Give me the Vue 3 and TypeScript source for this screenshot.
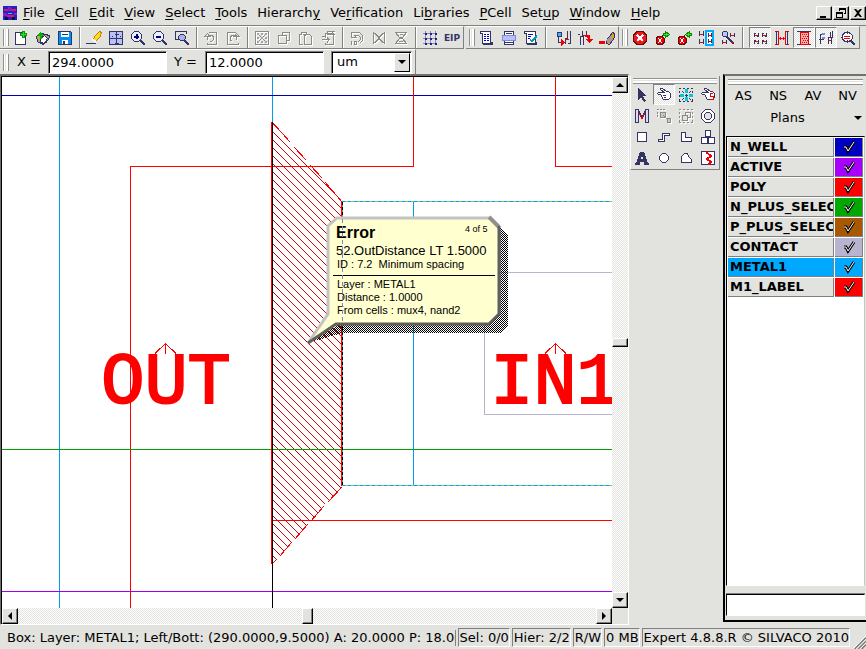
<script setup lang="ts">
import { ref } from 'vue'

type Shape = [d: string, stroke: string, fill?: string, width?: number]
interface Tool { icon: string; label: string; off?: boolean; on?: boolean }
interface Layer { name: string; color: string; visible: boolean }

const N = '#333366'
const G = '#8a8a86'
const R = '#f00000'
const C = '#00a8ff'

const handShape = 'M1.500 6.500l1-1h6l-4-3v-1h2l4 3h2l2 2v4l-2 2h-5l-1-1v-1l-1-1v-1l-1-1h-2z'

const icons: Record<string, Shape[]> = {
  app: [
    ['M0 0h16v16H0z', 'none', '#2222c8'],
    ['M1 3h5v3H1zM9 3h6v3H9zM4 10h8v2H4z', 'none', '#f01050'],
    ['M6 1h3v5H6zM0 8h4v3H0zM12 8h4v2h-4z', 'none', '#8020d0'],
    ['M2 4h2v1H2zM11 4h2v1h-2zM6 8h4v1H6z', 'none', '#20d0f0'],
    ['M2 13h4v3H2zM10 13h4v3h-4z', 'none', '#081050'],
  ],
  create: [
    ['M2.5 2.5h8l2 3v9h-10z', N, '#fff'],
    ['M10.5 1v7M7 4.5h7', '#00a000', 'none', 3],
    ['M10.5 2v5M8 4.5h5', '#30e030'],
  ],
  open: [
    ['M1.5 6.500l5-3 8 2v2l-4 6-3 1-5-3z', N, '#b0a868'],
    ['M5.500 8.500l4-3 3 3-3 5-4-1z', N, '#fff'],
    ['M5.500 9V4M3 5h5', '#00b800', 'none', 2],
    ['M4 3.500h3M5 2.500h1', '#00b800'],
  ],
  save: [
    ['M1.5 1.5h12l1 1v12h-13z', N, '#0090f0'],
    ['M4 2h8v5H4zM5 10h6v4H5z', 'none', '#fff'],
    ['M5 4h6v1H5zM6 11h2v3H6z', 'none', N],
  ],
  brush: [
    ['M6.500 10.500l3-5 4-4 2 1-1 4-5 5z', '#c88000', '#ffd820'],
    ['M6 9l4 3', '#f8f8f8', 'none', 2],
    ['M0 13.500h10', N],
  ],
  fit: [
    ['M1.5 1.5h13v13h-13z', N, '#b8c0f4'],
    ['M8.500 2v12M2 8.500h12M4 6.500h1M12 6.500h1M6.500 4h4M6.500 13h4', N],
  ],
  zoomIn: [
    ['M4.500 1.5h4l3 3v4l-3 3h-4l-3-3v-4z', N, '#e8f0ff'],
    ['M6.500 4v5M4 6.500h5', '#000080', 'none', 2],
    ['M10 10l5 5', N, 'none', 2],
  ],
  zoomOut: [
    ['M4.500 1.5h4l3 3v4l-3 3h-4l-3-3v-4z', N, '#e8f0ff'],
    ['M4 6.500h5', '#000080', 'none', 2],
    ['M10 10l5 5', N, 'none', 2],
  ],
  zoomBox: [
    ['M1.500 10V1.500h11v2', N],
    ['M1.500 9.500h4', N],
    ['M6.500 4.500h3l2 2v2l-2 2h-3l-2-2v-2z', N, '#a8b0f0'],
    ['M10 10l5 5', N, 'none', 2],
  ],
  undo: [
    ['M5.500 2.500h8v12h-9v-2', G],
    ['M6.500 11.500h2l2-2v-3l-2-1h-4M1.500 6.500h6l-3-3zM4.500 7v3', G],
  ],
  redo: [
    ['M10.500 2.500h-8v12h11v-2', G],
    ['M6.500 11.500l-1-2v-3l2-1h4M8.500 6.500h6l-3-3zM11.500 7v3', G],
  ],
  cut: [
    ['M1.500 1.500h13v13h-13z', G, 'none'],
    ['M3 3l10 10M13 3L3 13', G],
    ['M3 3h2v2H3zM7 3h2v2H7zM11 3h2v2h-2zM3 7h2v2H3zM7 7h2v2H7zM11 7h2v2h-2zM3 11h2v2H3zM7 11h2v2H7zM11 11h2v2h-2z', 'none', '#a4a4a0'],
  ],
  copy: [
    ['M6.500 5V2.500h7v8h-3', G],
    ['M2.500 5.500h8v8h-8z', G],
  ],
  paste: [
    ['M4.500 14.500h-3v-10h2v-2h5v2h3l2 2v8h-7v-9l3-1', G],
    ['M5 4.500h5', G],
  ],
  pasteIn: [
    ['M5.500 8V3.500h8v11h-8v-2M7 1.500h5v3H7zM2 9.500h7M7 7.500l2 2-2 3M2 6.500h3', G],
    ['M12 1h3M14 4h1', G],
  ],
  rotate: [
    ['M2.500 1.500v6h5l-2-2h4l2 2v2l-3 3M2.500 2.500h8l3 3v5l-3 3', G],
    ['M2 11v4M5.500 11.500h2v3h-2z', G],
  ],
  flipH: [['M2.500 2.500v11l5-5v-1zM13.500 2.500v11l-5-5v-1zM4.500 3l7 10M11.500 3l-7 10', G]],
  flipV: [['M2.500 2.500h11l-4 5h-3zM2.500 13.500h11l-4-5h-3zM7 4.500h3M6 11.500h4', G]],
  grid: [
    ['M3.500 1v14M8.500 1v14M13.500 1v14M1 3.500h14M1 8.500h14M1 13.500h14', '#8888bc'],
    ['M3 3h2v2H3zM8 3h2v2H8zM13 3h2v2h-2zM3 8h2v2H3zM8 8h2v2H8zM13 8h2v2h-2zM3 13h2v2H3zM8 13h2v2H8zM13 13h2v2h-2z', 'none', '#202080'],
  ],
  script: [
    ['M1.500 1.500h10v11h2v2h-9l-1-2v-9h-2z', N, '#fff'],
    ['M5 4.500h2M8 4.500h2M5 6.500h2M8 6.500h2M5 8.500h2M8 8.500h2M5 10.500h2M8 10.500h2', '#0000e0'],
    ['M5 13.500h8', N],
  ],
  scriptRun: [
    ['M3.500 1.500h9v13h-9z', N, '#fff'],
    ['M1.500 5.500h13v5h-13z', '#8088d8', '#b8c0ff'],
    ['M5 3.500h6M4 12.500h8', N],
  ],
  scriptEdit: [
    ['M1.500 1.500h11v11h1v2h-9l-1-2v-9h-2z', N, '#fff'],
    ['M5 4.500h5M5 6.500h3M5 8.500h2', '#0000e0'],
    ['M7 9.500l2 2 5-6', '#0098b8', 'none', 2],
    ['M5 13.500h9', N],
  ],
  probe: [
    ['M2 2h4v4H2z', N, '#40b0ff'],
    ['M3.500 7v5h5M12.500 1v7h-2v6M15.500 1v12h-3', N],
    ['M6.500 10l3 2.500-3 2.500z', R, R],
    ['M10 9.500h4', R],
  ],
  probeOut: [
    ['M3.500 15V6.500h2V1M6.500 15V5.500h3V1M1 4.500h2', N],
    ['M7 5.500h5.500v4M10 9.500h5l-2.500 3z', R, R],
  ],
  erase: [
    ['M0 12.500h6', R, 'none', 3],
    ['M7.500 10.500l6-8 2 1v4l-5 7-3-1z', N, '#e0a020'],
    ['M7 11l4-5 3 3-4 5z', 'none', '#a89898'],
  ],
  stop: [
    ['M5 1.500h6l3.500 3.500v6l-3.500 3.500h-6l-3.500-3.500v-6z', '#601010', '#f01818'],
    ['M5 5l6 6M11 5l-6 6', '#fff', 'none', 2],
  ],
  errorNext: [
    ['M4 6.500h4l2 2v4l-2 2h-4l-2-2v-4z', '#601010', R],
    ['M4 8l4 5M8 8l-4 5', '#fff'],
    ['M8 6l2-2', '#601010'],
    ['M9.500 3.500h2v-2l4 3-4 3v-2h-2z', '#108010', '#30f000'],
  ],
  errorPrev: [
    ['M4 6.500h4l2 2v4l-2 2h-4l-2-2v-4z', '#601010', R],
    ['M4 8l4 5M8 8l-4 5', '#fff'],
    ['M8 6l2-2', '#601010'],
    ['M15.500 3.500h-2v-2l-4 3 4 3v-2h2z', '#108010', '#30f000'],
  ],
  compare: [
    ['M1.500 1v5M5.500 1v5M1.500 9v5M5.500 9v5', N],
    ['M2 4.500h3M2 12.500h3', R],
    ['M8 1h7v14H8z', C, '#fff', 2],
    ['M10.500 3v4M13.500 3v4M10.500 9v4M13.500 9v4', N],
    ['M11 5.500h2M11 11.500h2', R],
  ],
  inspect: [
    ['M3.500 1.500h3l1 1v3l-1 1h-3l-1-1v-3z', N, '#b8c8ff'],
    ['M7 7l7 7', N, 'none', 2],
    ['M10.500 3v4M14.500 3v4M2.500 10v4M6.500 10v4', N],
    ['M11 5.500h3M3 12.500h3M11 12.500h3', R],
  ],
  cells: [
    ['M2.500 3v4M6.500 3v4M10.500 3v4M14.500 3v4M2.500 10v4M6.500 10v4M10.500 10v4M14.500 10v4', N],
    ['M3 3.500h1M5 6.500h1M11 3.500h1M13 6.500h1M3 10.500h1M5 13.500h1M11 10.500h1M13 13.500h1', N],
    ['M3 5.500h3M11 5.500h3M3 11.500h3M11 11.500h3', R],
  ],
  distance: [
    ['M1 1.500h3.500v13H1M15 1.500h-3.500v13H15', R],
    ['M2.500 1v14M13.500 1v14', N],
    ['M5 8.500h6M6.500 7v3M9.500 7v3', R],
  ],
  block: [
    ['M1 1.500h14M1 14.500h3M12 14.500h3', N],
    ['M4.500 2.500v12h8v-12z', R, '#f0b0b0'],
    ['M6 4.500h1M8 4.500h1M10 4.500h1M7 6.500h1M9 6.500h1M11 6.500h1M6 8.500h1M8 8.500h1M10 8.500h1M7 10.500h1M9 10.500h1M11 10.500h1M6 12.500h1M8 12.500h1M10 12.500h1', R],
  ],
  wires: [
    ['M2.500 14V4.500h3M1 9.500h5M10.500 14V7.500h2V2M13.500 14V7.500h1V1', N],
    ['M4 3.500h3M4 7.500h3', '#8088d8', 'none', 2],
    ['M10 10.500h3', R],
  ],
  zoomError: [
    ['M5 2.500h4l3 2.500v4l-3 2.500h-4L2.500 9V5z', N, '#fff'],
    ['M4 6.500h6M4 8.500h6', R],
    ['M11 11l4 4', N, 'none', 2],
    ['M1 7.500h2M7.500 1v3M7.500 10v3', N],
  ],
  arrow: [['M4 1v12l3-3 3 5 2-1-3-5h4z', 'none', N]],
  hand: [
    [handShape, N, '#fff'],
    ['M7 8.500h3M8 10.500h2', N],
  ],
  handS: [
    [handShape, N, '#fff'],
    ['M13 6.500h-3v3h3v3h-3', R],
  ],
  target: [
    ['M1 1.500h2M5 1.500h2M9 1.500h2M13 1.500h2M1 14.500h2M5 14.500h2M9 14.500h2M13 14.500h2M1.500 4v2M1.500 8v2M1.500 12v2M14.500 4v2M14.500 8v2M14.500 12v2', N],
    ['M8.500 2v4M8.500 10v4M2 8.500h4M11 8.500h4', '#00c8d8', 'none', 3],
    ['M4 4l2 2M13 4l-2 2M4 13l2-2M13 13l-2-2M7 8.500h3M8.500 7v3', N],
  ],
  merge: [
    ['M1.500 1.500h3v13h-3zM11.500 1.500h3v13h-3z', N, '#d8dcf8'],
    ['M4.500 2l3.500 7 3.500-7', N],
    ['M5 5l3 6 3-6', R],
  ],
  group: [
    ['M1 1.500h2M4 1.500h2M7 1.500h2M1.500 4v2M1.500 7v2M4 8.500h2', G],
    ['M4.500 4.500h5v5h-5zM7.500 7.500l4 4M11.500 10.500h3v4h-3z', G, '#c8c8c4'],
  ],
  select: [
    ['M1 1.500h2M5 1.500h2M9 1.500h2M13 1.500h2M1 14.500h2M5 14.500h2M9 14.500h2M13 14.500h2M1.500 4v2M1.500 8v2M1.500 12v2M14.500 4v2M14.500 8v2M14.500 12v2', G],
    ['M7.500 4.500h5v5h-5z', G],
    ['M4.500 7.500h5v5h-5z', G, '#e2e2de'],
  ],
  ring: [
    ['M5.500 1.500h5l4 4v5l-4 4h-5l-4-4v-5z', N, '#fff'],
    ['M6.500 4.500h3l2 2v3l-2 2h-3l-2-2v-3z', N, '#e2e2de'],
  ],
  rect: [['M3.500 3.500h9v9h-9z', N, '#fff']],
  wire: [['M2.500 10.500h4v-6h7v2h-5v6h-6z', N, '#fff']],
  poly: [['M3.500 3.500h4v5h6v4h-10z', N, '#fff']],
  stack: [['M5.500 1.500h5v6h-5zM1.500 8.500h6v6h-6zM8.500 8.500h6v6h-6z', N, '#fff']],
  text: [['M6 2h4l4 11h1v2h-5v-3H6v3H1v-2h1zM7 9h2l-1-4z', 'none', N]],
  circle: [['M6.500 3.500h3l3 3v3l-3 3h-3l-3-3v-3z', N, '#fff']],
  arc: [['M3.500 12.500v-6l3-3h3l1 3 3 3v3z', N, '#fff']],
  break: [
    ['M1.500 1.500h13v13h-13z', N, '#fff'],
    ['M6 2l5 4-4 3 4 3-3 3', R, 'none', 2],
  ],
}

const menus = ['_File', '_Cell', '_Edit', '_View', '_Select', '_Tools', 'Hierarch_y', 'Ve_rification', 'Li_braries', '_PCell', 'Set_up', '_Window', '_Help'].map((m) => {
  const i = m.indexOf('_')
  return { before: m.slice(0, i), key: m[i + 1], after: m.slice(i + 2) }
})

const t = (icon: string, label: string, extra: Partial<Tool> = {}): Tool => ({ icon, label, ...extra })
const off = { off: true }
const on = { on: true }

const bars: { name: string; wide: boolean; groups: Tool[][] }[] = [
  {
    name: 'Standard', wide: false, groups: [
      [t('create', 'New'), t('open', 'Open'), t('save', 'Save')],
      [t('brush', 'Redraw'), t('fit', 'Fit all'), t('zoomIn', 'Zoom in'), t('zoomOut', 'Zoom out'), t('zoomBox', 'Zoom box')],
      [t('undo', 'Undo', off), t('redo', 'Redo', off)],
      [t('cut', 'Cut', off), t('copy', 'Copy', off), t('paste', 'Paste', off), t('pasteIn', 'Paste into', off)],
      [t('rotate', 'Rotate', off), t('flipH', 'Flip horizontal', off), t('flipV', 'Flip vertical', off)],
      [t('grid', 'Grid'), t('EIP', 'Edit in place')],
    ],
  },
  {
    name: 'Scripts', wide: true, groups: [
      [t('script', 'Script'), t('scriptRun', 'Run script'), t('scriptEdit', 'Edit script')],
      [t('probe', 'Probe'), t('probeOut', 'Probe net'), t('erase', 'Erase marks')],
    ],
  },
  {
    name: 'Errors', wide: true, groups: [
      [t('stop', 'Stop'), t('errorNext', 'Next error'), t('errorPrev', 'Previous error'), t('compare', 'Compare'), t('inspect', 'Inspect')],
      [t('cells', 'Cells', on), t('distance', 'Distance'), t('block', 'Block', on), t('wires', 'Wires', on), t('zoomError', 'Zoom to error')],
    ],
  },
]

const palette: Tool[] = [
  t('arrow', 'Select'), t('hand', 'Pan', on), t('target', 'Move'), t('handS', 'Stretch'),
  t('merge', 'Merge'), t('group', 'Group', off), t('select', 'Ungroup', off), t('ring', 'Ring'),
  t('rect', 'Box'), t('wire', 'Wire'), t('poly', 'Polygon'), t('stack', 'Array'),
  t('text', 'Text'), t('circle', 'Circle'), t('arc', 'Arc'), t('break', 'Break'),
]

const layers = ref<Layer[]>([
  { name: 'N_WELL', color: '#0000c0', visible: true },
  { name: 'ACTIVE', color: '#a800ff', visible: true },
  { name: 'POLY', color: '#ff0000', visible: true },
  { name: 'N_PLUS_SELECT', color: '#00a800', visible: true },
  { name: 'P_PLUS_SELECT', color: '#a85800', visible: true },
  { name: 'CONTACT', color: '#b8b4d0', visible: true },
  { name: 'METAL1', color: '#00a8ff', visible: true },
  { name: 'M1_LABEL', color: '#ff0000', visible: true },
])
const current = ref('METAL1')
const filters = ['AS', 'NS', 'AV', 'NV']
const panes = ['Sel: 0/0', 'Hier: 2/2', 'R/W', '0 MB', 'Expert 4.8.8.R © SILVACO 2010']

const x = ref('294.0000')
const y = ref('12.0000')
const panX = ref(50)
const panY = ref(50)

const hatch = Array.from({ length: 8 }, (_, i) => `M${i} ${i}h1v1h-1z`).join('')
</script>

<template>
  <div class="app">
    <nav class="menubar">
      <svg class="logo" viewBox="0 0 16 16" shape-rendering="crispEdges" aria-hidden="true">
        <path v-for="(s, i) in icons.app" :key="i" :d="s[0]" :fill="s[2]" />
      </svg>
      <button v-for="m in menus" :key="m.before + m.key + m.after" class="menu">{{ m.before }}<u>{{ m.key }}</u>{{ m.after }}</button>
      <div class="window-buttons">
        <button aria-label="Minimize"><svg viewBox="0 0 12 12"><path d="M2 9h6v2H2z" /></svg></button>
        <button aria-label="Restore"><svg viewBox="0 0 12 12"><path d="M4 1h7v6H9V6h1V3H5v1H4zM1 5h7v6H1zM2 7v3h5V7z" fill-rule="evenodd" /></svg></button>
        <button aria-label="Close"><svg viewBox="0 0 12 12"><path d="M2 2h2l2 2 2-2h2L7 6l3 4H8L6 8l-2 2H2l3-4z" /></svg></button>
      </div>
    </nav>

    <div class="toolrow">
      <div v-for="b in bars" :key="b.name" class="bar" :class="{ wide: b.wide }" role="toolbar" :aria-label="b.name">
        <span class="grip"></span>
        <template v-for="(g, gi) in b.groups" :key="gi">
          <span v-if="gi" class="sep"></span>
          <button v-for="tool in g" :key="tool.icon" class="tool" :class="{ on: tool.on, off: tool.off }" :aria-label="tool.label" :disabled="tool.off">
            <span v-if="tool.icon === 'EIP'" class="eip">EIP</span>
            <svg v-else viewBox="0 0 16 16" shape-rendering="crispEdges">
              <path v-for="(s, i) in icons[tool.icon]" :key="i" :d="s[0]" :stroke="s[1]" :fill="s[2] ?? 'none'" :stroke-width="s[3] ?? 1" />
            </svg>
          </button>
        </template>
      </div>
    </div>

    <div class="coordrow">
      <div class="bar coords">
        <span class="grip"></span>
        <label for="cx">X =</label>
        <input id="cx" v-model="x" type="text" />
        <label for="cy">Y =</label>
        <input id="cy" v-model="y" type="text" />
        <div class="unit">
          <select aria-label="Units"><option>um</option></select>
          <span class="drop"><i class="tri down"></i></span>
        </div>
      </div>
    </div>

    <main class="work">
      <section class="view">
        <svg class="canvas" shape-rendering="crispEdges">
          <defs>
            <pattern id="hatch" x="1" y="4" width="8" height="8" patternUnits="userSpaceOnUse">
              <path :d="hatch" fill="#d80000" />
            </pattern>
            <pattern id="dither" width="2" height="2" patternUnits="userSpaceOnUse">
              <path d="M0 0h1v1h-1zM1 1h1v1h-1z" fill="#000" />
            </pattern>
          </defs>
          <g transform="translate(-2 -77)" fill="none">
            <g class="names">
              <text x="166" y="403">OUT</text>
              <text x="555" y="403">IN1</text>
            </g>
            <path d="M59.5 77v2000M272.500 77v45M413.500 201v285" stroke="#00a0f0" />
            <path d="M0 95.500h2000" stroke="#0000b0" />
            <path d="M130.500 2000V166.500h283V0M555.500 0v166.500h2000M272 520.500h2000" stroke="#ff0000" />
            <path d="M2000 272.500H484.500v142H2000" stroke="#b8b4d0" />
            <path d="M155 353.500l10.500-10 10.500 10M165.500 344v10M545 353.500l10.500-10 10.500 10M555.500 344v10" stroke="#ff0000" />
            <path d="M272 122l70 80v284l-70 78z" fill="url(#hatch)" />
            <path d="M273 123l17 19M294 147l12 13M310 165l12 13M325 182l17 20M273 563l4-4M280 556l12-14M295 539l13-15M311 521l13-15M328 502l14-15" stroke="#ff0000" />
            <path d="M342 201.500h2000M342 485.500h2000" stroke="#80c080" />
            <path d="M342 201.500h2000M342 485.500h2000" stroke="#00a0f0" stroke-dasharray="3 3" />
            <path d="M0 449.500h2000" stroke="#00a000" />
            <path d="M0 591.500h2000" stroke="#a000f0" />
            <path d="M271.500 122v442M341.500 201v285" stroke="#ff0000" />
            <path d="M272.500 122v2000" stroke="#000" />
            <path d="M342.500 202v284" stroke="#909090" />
            <path d="M342.500 202v284" stroke="#000" stroke-dasharray="3 2" />

            <path d="M308 343l37-22h145l9-94 9 9v89l-8 8H342l-24 7z" fill="url(#dither)" />
            <g shape-rendering="auto">
              <path d="M328 313V226l9-8h153l9 9v87l-10 10H336l-28 19z" fill="#ffffd0" />
              <path d="M308 343l20-29V226l9-8h153" stroke="#c4c4c4" stroke-width="3" />
              <path d="M489 217l10 10" stroke="#909090" stroke-width="4" />
              <path d="M499 226v88l-10 10H336l-28 19" stroke="#606060" stroke-width="3" />
            </g>
            <path d="M333 275.500h162" stroke="#000" />
            <g class="note">
              <text class="title" x="336" y="238">Error</text>
              <text class="count" x="465" y="232">4 of 5</text>
              <text class="rule" x="336" y="255">52.OutDistance LT 1.5000</text>
              <text x="337" y="268">ID : 7.2&#160; Minimum spacing</text>
              <text x="337" y="288">Layer : METAL1</text>
              <text x="337" y="301">Distance : 1.0000</text>
              <text x="337" y="314">From cells : mux4, nand2</text>
            </g>
            <path d="M342.500 219v103" stroke="#8088b8" stroke-dasharray="4 3" />
          </g>
        </svg>
        <div class="vscroll">
          <button aria-label="Scroll up"><i class="tri up"></i></button>
          <input v-model="panY" type="range" aria-label="Vertical position" />
          <button aria-label="Scroll down"><i class="tri down"></i></button>
        </div>
        <div class="hscroll">
          <button aria-label="Scroll left"><i class="tri left"></i></button>
          <input v-model="panX" type="range" aria-label="Horizontal position" />
          <button aria-label="Scroll right"><i class="tri right"></i></button>
        </div>
      </section>

      <aside class="palette">
        <span class="hgrip"></span>
        <div class="palette-grid">
          <button v-for="tool in palette" :key="tool.icon" class="tool" :class="{ on: tool.on, off: tool.off }" :aria-label="tool.label" :disabled="tool.off">
            <svg viewBox="0 0 16 16" shape-rendering="crispEdges">
              <path v-for="(s, i) in icons[tool.icon]" :key="i" :d="s[0]" :stroke="s[1]" :fill="s[2] ?? 'none'" :stroke-width="s[3] ?? 1" fill-rule="evenodd" />
            </svg>
          </button>
        </div>
      </aside>

      <aside class="layers">
        <span class="hgrip"></span>
        <div class="filters">
          <button v-for="f in filters" :key="f">{{ f }}</button>
        </div>
        <div class="plans">
          <select aria-label="Plan"><option>Plans</option></select>
          <i class="tri down"></i>
        </div>
        <div class="list">
          <table>
            <tbody>
              <tr v-for="l in layers" :key="l.name" :class="{ current: l.name === current }" @click="current = l.name">
                <td class="name">{{ l.name }}</td>
                <td class="swatch" :style="{ background: l.color }">
                  <label>
                    <input v-model="l.visible" type="checkbox" :aria-label="l.name" />
                    <svg v-if="l.visible" viewBox="0 0 14 14" fill="none">
                      <path d="M2 7h2l2 4 6-9" stroke="#000" stroke-width="3" />
                      <path d="M2 7h2l2 4 6-9" stroke="#fff" />
                    </svg>
                  </label>
                </td>
              </tr>
            </tbody>
          </table>
        </div>
        <div class="split"></div>
        <div class="notes"></div>
      </aside>
    </main>

    <footer class="status">
      <div class="message">Box: Layer: METAL1; Left/Bott: (290.0000,9.5000) A: 20.0000 P: 18.0000</div>
      <div v-for="p in panes" :key="p" class="pane">{{ p }}</div>
      <svg class="sizer" viewBox="0 0 16 16" aria-hidden="true">
        <path d="M3 16L16 3M7 16l9-9M11 16l5-5" stroke="#808080" stroke-width="2" />
        <path d="M1 16L16 1M5 16L16 5M9 16l7-7" stroke="#fff" />
      </svg>
    </footer>
  </div>
</template>

<style>
body {
  background: #e2e2de;
}
</style>

<style scoped>
.app {
  display: flex;
  flex-direction: column;
  height: 100vh;
  overflow: hidden;
  background: #e2e2de;
  color: #000;
  font: 13px/16px "DejaVu Sans", sans-serif;
}
.app * {
  box-sizing: border-box;
}
button,
input,
select {
  margin: 0;
  padding: 0;
  border: 0;
  border-radius: 0;
  background: none;
  color: inherit;
  font: inherit;
  appearance: none;
  outline: none;
}
.menubar {
  display: flex;
  flex: none;
  align-items: center;
  gap: 10px;
  height: 26px;
  padding-left: 3px;
  border-bottom: 1px solid #808080;
}
.logo {
  width: 14px;
  height: 14px;
  margin-right: -4px;
}
.menu {
  white-space: nowrap;
}
.menu u {
  text-underline-offset: 2px;
}
.window-buttons {
  display: flex;
  margin-left: auto;
  gap: 1px;
}
.window-buttons button {
  display: flex;
  width: 16px;
  height: 14px;
  align-items: center;
  justify-content: center;
  border: 1px solid;
  border-color: #fff #000 #000 #fff;
  box-shadow: inset -1px -1px #808080;
}
.window-buttons svg {
  width: 12px;
  height: 12px;
}
.toolrow {
  display: flex;
  flex: none;
  height: 23px;
}
.bar {
  display: flex;
  flex: none;
  align-items: center;
  border-top: 1px solid #fff;
  border-right: 1px solid #808080;
  border-bottom: 1px solid #808080;
}
.bar:first-child {
  margin-right: 2px;
}
.grip {
  width: 6px;
  height: 17px;
  margin: 0 1px 0 3px;
  border: solid #909090;
  border-width: 0 1px;
  box-shadow: inset 1px 0 #fff, inset -2px 0 #fff;
}
.sep {
  width: 7px;
  height: 21px;
  background: linear-gradient(90deg, transparent 3px, #808080 3px, #808080 4px, #fff 4px, #fff 5px, transparent 5px);
}
.wide .sep {
  width: 10px;
}
.tool {
  display: flex;
  width: 22px;
  height: 21px;
  align-items: center;
  justify-content: center;
}
.tool svg {
  flex: none;
  width: 16px;
  height: 16px;
}
.tool.on {
  border: 1px solid;
  border-color: #808080 #fff #fff #808080;
  background: repeating-conic-gradient(#fff 0 25%, #e2e2de 0 50%) 0 0 / 2px 2px;
}
.tool.off svg {
  filter: drop-shadow(1px 1px 0 #fff);
}
.eip {
  color: #333366;
  font-size: 9px;
  font-weight: bold;
}
.coordrow {
  display: flex;
  flex: none;
  height: 25px;
}
.coords {
  padding-right: 3px;
  border-bottom: 0;
}
.coords label {
  width: 38px;
  padding-left: 7px;
  white-space: nowrap;
}
.coords input,
.unit {
  width: 119px;
  height: 23px;
  border: 1px solid;
  border-color: #808080 #fff #fff #808080;
  background: #fff;
  box-shadow: inset 1px 1px #000;
}
.coords input {
  padding-left: 3px;
}
.unit {
  display: flex;
  position: relative;
  width: 81px;
  margin-left: 7px;
  padding: 1px;
}
.unit select {
  flex: 1;
  padding-left: 4px;
}
.drop {
  display: flex;
  position: absolute;
  top: 1px;
  right: 1px;
  bottom: 1px;
  width: 16px;
  align-items: center;
  justify-content: center;
  border: 1px solid;
  border-color: #fff #000 #000 #fff;
  background: #e2e2de;
  pointer-events: none;
}
.tri {
  width: 0;
  height: 0;
  border: 4px solid transparent;
}
.tri.down {
  border-top-color: #000;
  border-bottom: 0;
}
.tri.up {
  border-bottom-color: #000;
  border-top: 0;
}
.tri.left {
  border-right-color: #000;
  border-left: 0;
}
.tri.right {
  border-left-color: #000;
  border-right: 0;
}
.work {
  display: flex;
  flex: 1;
  min-height: 0;
}
.view {
  display: grid;
  flex: 1;
  grid-template: minmax(0, 1fr) 16px / minmax(0, 1fr) 16px;
  min-width: 0;
  border: solid;
  border-color: #707070 #fff #fff #707070;
  border-width: 2px 1px 1px 1px;
}
.canvas {
  width: 100%;
  height: 100%;
  border: solid #000;
  border-width: 1px 0 0 1px;
  background: #fff;
  overflow: hidden;
}
.names {
  fill: #ff0000;
  stroke: #ff0000;
  stroke-width: 2px;
  font: 72px "Liberation Mono", monospace;
  text-anchor: middle;
}
.note {
  fill: #000;
  font: 11px "Liberation Sans", sans-serif;
}
.note .title {
  font-size: 16px;
  font-weight: bold;
}
.note .count {
  font-size: 9px;
}
.note .rule {
  font-size: 13px;
}
.vscroll,
.hscroll {
  display: flex;
  min-width: 0;
  min-height: 0;
  background: repeating-conic-gradient(#fff 0 25%, #e2e2de 0 50%) 0 0 / 2px 2px;
}
.vscroll {
  flex-direction: column;
  border-top: 1px solid #000;
}
.hscroll {
  border-left: 1px solid #000;
}
.vscroll button,
.hscroll button {
  display: flex;
  flex: none;
  width: 16px;
  height: 16px;
  align-items: center;
  justify-content: center;
  border: 1px solid;
  border-color: #fff #000 #000 #fff;
  background: #e2e2de;
  box-shadow: inset -1px -1px #808080;
}
.vscroll input {
  flex: 1;
  width: 16px;
  min-height: 0;
  writing-mode: vertical-lr;
}
.hscroll input {
  flex: 1;
  min-width: 0;
  height: 16px;
}
input[type="range"]::-webkit-slider-thumb {
  width: 11px;
  height: 16px;
  border: 1px solid;
  border-color: #fff #000 #000 #fff;
  background: #e2e2de;
  box-shadow: inset -1px -1px #808080;
  appearance: none;
}
.vscroll input[type="range"]::-webkit-slider-thumb {
  width: 16px;
  height: 9px;
}
.palette {
  display: flex;
  flex: none;
  flex-direction: column;
  align-self: flex-start;
  width: 90px;
  margin: 2px 3px 0 1px;
  padding: 2px 0 1px;
  border: solid;
  border-color: #fff #808080 #808080 #fff;
  border-width: 0 1px 1px 1px;
}
.hgrip {
  flex: none;
  height: 6px;
  margin: 0 2px;
  border: solid #909090;
  border-width: 1px 0;
  box-shadow: inset 0 1px #fff, inset 0 -2px #fff;
}
.palette-grid {
  display: grid;
  grid-template-columns: repeat(4, 22px);
}
.layers {
  display: flex;
  flex: none;
  flex-direction: column;
  width: 143px;
  margin-bottom: 3px;
  padding: 3px 1px 4px;
  border: solid;
  border-color: #707070 #707070 #000 #000;
  border-width: 2px 0 2px 2px;
}
.layers .hgrip {
  margin: 0 2px 1px;
}
.filters {
  display: grid;
  grid-template-columns: repeat(4, 1fr);
  height: 20px;
}
.plans {
  display: flex;
  position: relative;
  height: 24px;
  margin-bottom: 6px;
}
.plans select {
  width: 100%;
  padding-right: 16px;
  text-align: center;
  text-align-last: center;
}
.plans .tri {
  position: absolute;
  top: 10px;
  right: 3px;
  pointer-events: none;
}
.list {
  flex: 1;
  min-height: 0;
  border: 1px solid;
  border-color: #000 #c8c8c4 #fff #000;
  background: #fff;
  overflow: hidden;
}
.list table {
  width: 100%;
  border-collapse: separate;
  border-spacing: 1px;
  table-layout: fixed;
}
.list td {
  height: 19px;
  padding: 0;
  border: solid #808080;
  border-width: 0 1px 1px 0;
}
.list .name {
  padding-left: 2px;
  background: #e2e2de;
  font-weight: bold;
  overflow: hidden;
  white-space: nowrap;
}
.list .current .name {
  background: #00a8ff;
}
.swatch {
  width: 28px;
}
.swatch label {
  display: flex;
  position: relative;
  justify-content: center;
}
.swatch input {
  position: absolute;
  inset: 0;
}
.swatch svg {
  width: 14px;
  height: 14px;
}
.split {
  flex: none;
  height: 8px;
  border-bottom: 1px solid #808080;
}
.notes {
  flex: none;
  height: 22px;
  border: 1px solid;
  border-color: #000 #fff #fff #000;
  background: #fff;
}
.status {
  display: flex;
  flex: none;
  align-items: center;
  gap: 2px;
  height: 24px;
  padding-top: 1px;
  white-space: nowrap;
}
.message {
  flex: 1;
  min-width: 0;
  padding-left: 7px;
  border-right: 1px solid #808080;
  overflow: hidden;
}
.pane {
  flex: none;
  height: 19px;
  padding: 1px 0 0 1px;
  border: 1px solid;
  border-color: #808080 #fff #fff #808080;
}
.sizer {
  flex: none;
  align-self: flex-end;
  width: 14px;
  height: 14px;
}
</style>
